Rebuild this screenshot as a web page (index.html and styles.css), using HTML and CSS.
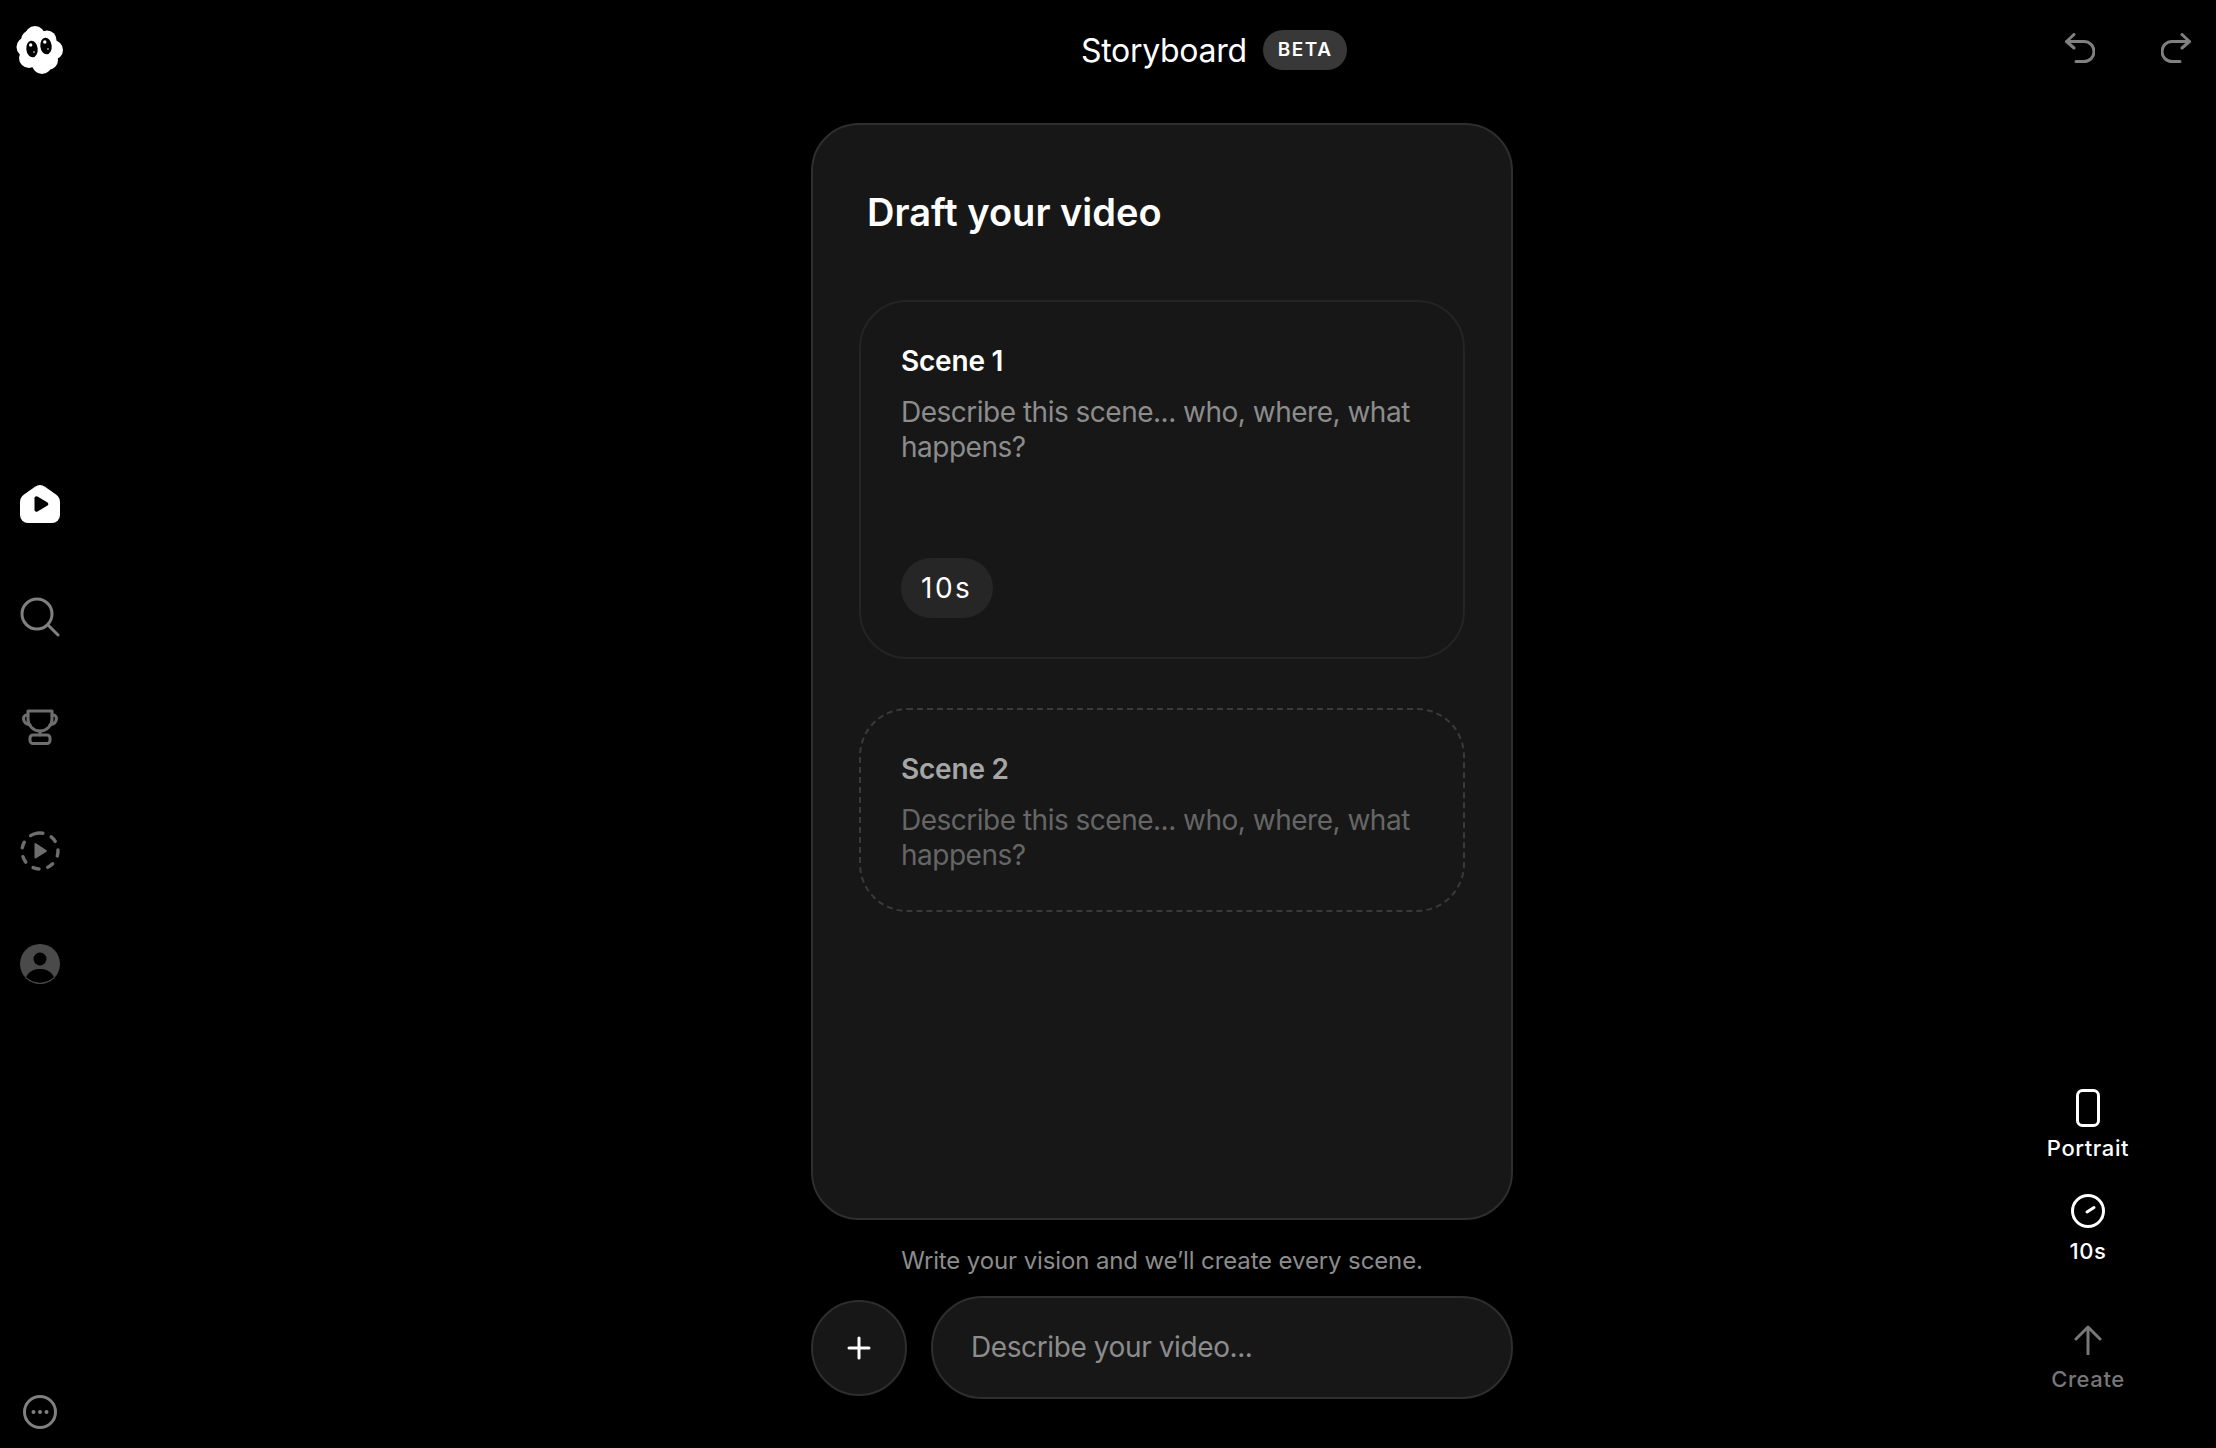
FILE: index.html
```html
<!DOCTYPE html>
<html lang="en">
<head>
    <meta charset="UTF-8">
    <meta name="viewport" content="width=device-width, initial-scale=1.0">
    <title>Storyboard</title>
    <link rel="stylesheet" href="styles.css">
</head>
<body>

<div class="app">
    <aside class="sidebar">
        <svg class="logo" width="48" height="50" viewBox="0 0 48 50">
            <g fill="#fff">
                <circle cx="24" cy="25" r="17"/>
                <circle cx="19" cy="11" r="10"/>
                <circle cx="31" cy="15" r="9.5"/>
                <circle cx="37" cy="25" r="10"/>
                <circle cx="32" cy="35" r="10"/>
                <circle cx="26" cy="39" r="10"/>
                <circle cx="13" cy="33" r="10"/>
                <circle cx="10.5" cy="22" r="10"/>
                <circle cx="15" cy="15" r="10"/>
            </g>
            <ellipse cx="16" cy="24" rx="5.7" ry="8.3" transform="rotate(-6 16 24)" fill="#000"/>
            <ellipse cx="30" cy="21" rx="5.7" ry="8.3" transform="rotate(-6 30 21)" fill="#000"/>
            <circle cx="14.7" cy="20" r="1.7" fill="#fff"/>
            <circle cx="28.8" cy="17" r="1.7" fill="#fff"/>
            <circle cx="18" cy="27" r="0.8" fill="#fff"/>
            <circle cx="32" cy="24" r="0.8" fill="#fff"/>
        </svg>

        <nav class="nav">
            <svg class="nav-home" width="40" height="40" viewBox="0 0 40 40">
                <path d="M15 2.8 Q20 -0.6 25 2.8 L36 10.5 Q40 13.5 40 18 V31 A8 8 0 0 1 32 39 H8 A8 8 0 0 1 0 31 V18 Q0 13.5 4 10.5 Z" fill="#fff"/>
                <path d="M14.5 14.2 A2 2 0 0 1 17.5 12.5 L27.5 18.4 A2 2 0 0 1 27.5 21.6 L17.5 27.5 A2 2 0 0 1 14.5 25.8 Z" fill="#000"/>
            </svg>
            <svg class="nav-search" width="40" height="40" viewBox="0 0 40 40" fill="none" stroke="#808080" stroke-width="3" stroke-linecap="round">
                <circle cx="17" cy="17" r="15"/>
                <path d="M28 28 L38 38"/>
            </svg>
            <svg class="nav-trophy" width="36" height="36" viewBox="0 0 36 36" fill="none" stroke="#6e6e6e" stroke-width="3" stroke-linecap="round" stroke-linejoin="round">
                <path d="M6 2 H30 V10 A12 12 0 0 1 6 10 Z"/>
                <path d="M6 6 H5 A3.5 3.5 0 0 0 1.5 9.5 C1.5 13 4 15 8 16"/>
                <path d="M30 6 H31 A3.5 3.5 0 0 1 34.5 9.5 C34.5 13 32 15 28 16"/>
                <path d="M18 22 V26"/>
                <rect x="8" y="26" width="20" height="8.5" rx="3"/>
            </svg>
            <svg class="nav-drafts" width="40" height="40" viewBox="0 0 40 40">
                <circle cx="20" cy="20" r="18" fill="none" stroke="#6e6e6e" stroke-width="3.4" stroke-linecap="round" stroke-dasharray="6 9.1" transform="rotate(-100 20 20)"/>
                <path d="M14.5 13 V26.5 A1 1 0 0 0 16 27.3 L26.5 20.8 A1 1 0 0 0 26.5 19.2 L16 12.3 A1 1 0 0 0 14.5 13 Z" fill="#6e6e6e"/>
            </svg>
            <svg class="nav-profile" width="40" height="40" viewBox="0 0 40 40">
                <circle cx="20" cy="20" r="20" fill="#4a4a4a"/>
                <circle cx="20" cy="15" r="6.5" fill="#000"/>
                <path d="M6 33 C10 26 15 25 20 25 C25 25 30 26 34 33 A20 20 0 0 1 6 33 Z" fill="#000"/>
            </svg>
        </nav>

        <svg class="more" width="34" height="34" viewBox="0 0 34 34">
            <circle cx="17" cy="17" r="15.5" fill="none" stroke="#808080" stroke-width="3"/>
            <circle cx="10.5" cy="17" r="2" fill="#808080"/>
            <circle cx="17" cy="17" r="2" fill="#808080"/>
            <circle cx="23.5" cy="17" r="2" fill="#808080"/>
        </svg>
    </aside>

    <main class="center">
        <header class="topbar">
            <span class="page-title">Storyboard</span>
            <span class="beta">BETA</span>
        </header>

        <section class="panel">
            <h1>Draft your video</h1>

            <div class="scene">
                <h2>Scene 1</h2>
                <p>Describe this scene... who, where, what happens?</p>
                <span class="chip">10s</span>
            </div>

            <div class="scene scene-next">
                <h2>Scene 2</h2>
                <p>Describe this scene... who, where, what happens?</p>
            </div>
        </section>

        <p class="hint">Write your vision and we’ll create every scene.</p>

        <div class="composer">
            <button class="add-btn">
                <svg width="24" height="24" viewBox="0 0 24 24" fill="none" stroke="#fff" stroke-width="3" stroke-linecap="round">
                    <path d="M12 2 V22 M2 12 H22"/>
                </svg>
            </button>
            <div class="prompt">Describe your video...</div>
        </div>
    </main>

    <aside class="rail">
        <div class="history">
            <svg width="30" height="30" viewBox="0 0 30 30" fill="none" stroke="#808080" stroke-width="3" stroke-linecap="round" stroke-linejoin="round">
                <path d="M9 1.5 L1.5 8.5 L9 15"/>
                <path d="M2 8.5 H19 A9.5 9.5 0 0 1 19 28.5 H11"/>
            </svg>
            <svg width="30" height="30" viewBox="0 0 30 30" fill="none" stroke="#808080" stroke-width="3" stroke-linecap="round" stroke-linejoin="round">
                <path d="M21 1.5 L28.5 8.5 L21 15"/>
                <path d="M28 8.5 H11 A9.5 9.5 0 0 0 11 28.5 H19"/>
            </svg>
        </div>

        <div class="tools">
            <div class="tool tool-portrait">
                <svg width="24" height="38" viewBox="0 0 24 38" fill="none" stroke="#fff" stroke-width="3">
                    <rect x="1.5" y="1.5" width="21" height="35" rx="5"/>
                </svg>
                <span>Portrait</span>
            </div>
            <div class="tool tool-length">
                <svg width="34" height="34" viewBox="0 0 34 34" fill="none" stroke="#fff" stroke-width="3" stroke-linecap="round">
                    <circle cx="17" cy="17" r="15.5"/>
                    <path d="M16 18 L23 13.5"/>
                </svg>
                <span>10s</span>
            </div>
            <div class="tool tool-create">
                <svg width="28" height="30" viewBox="0 0 28 30" fill="none" stroke="#777" stroke-width="3" stroke-linecap="round" stroke-linejoin="round">
                    <path d="M14 29 V2 M2 14 L14 2 L26 14"/>
                </svg>
                <span>Create</span>
            </div>
        </div>
    </aside>
</div>

</body>
</html>
```

FILE: styles.css
```css
* {
    box-sizing: border-box;
}
body {
    font-family: Inter, "Noto Sans", sans-serif;
    margin: 0;
    background-color: #000;
    color: #fff;
}
.app {
    display: grid;
    grid-template-columns: 811px 702px 1fr;
    height: 1448px;
    overflow: hidden;
}

/* left nav */
.sidebar {
    display: flex;
    flex-direction: column;
    align-items: flex-start;
    padding: 25px 0 19px 16px;
}
.logo {
    display: block;
}
.nav {
    display: flex;
    flex-direction: column;
    align-items: center;
    width: 48px;
    margin-top: 409px;
}
.nav-search {
    margin-top: 73px;
}
.nav-trophy {
    margin-top: 72px;
}
.nav-drafts {
    margin-top: 86px;
}
.nav-profile {
    margin-top: 73px;
}
.more {
    margin-top: auto;
    margin-left: 7px;
}

/* middle column */
.center {
    display: flex;
    flex-direction: column;
}
.topbar {
    display: flex;
    align-items: center;
    gap: 16px;
    height: 100px;
    margin-bottom: 23px;
    padding-left: 270px;
}
.page-title {
    font-size: 32px;
    letter-spacing: -0.3px;
    white-space: nowrap;
}
.beta {
    padding: 0 15px;
    line-height: 40px;
    border-radius: 20px;
    background-color: #383838;
    font-size: 19px;
    font-weight: 600;
    letter-spacing: 1.5px;
}
.panel {
    height: 1097px;
    padding: 64px 46px 0;
    background-color: #171717;
    border: 2px solid #2e2e2e;
    border-radius: 48px;
}
h1 {
    margin: 0 0 65px 8px;
    font-size: 38px;
    line-height: 46px;
    font-weight: 600;
}
.scene {
    height: 359px;
    margin-bottom: 49px;
    padding: 42px 40px 0;
    border: 2px solid #242424;
    border-radius: 48px;
}
.scene h2 {
    margin: 0 0 17px;
    font-size: 28px;
    line-height: 34px;
    font-weight: 600;
    letter-spacing: -0.2px;
}
.scene p {
    margin: 0;
    font-size: 28px;
    line-height: 35px;
    letter-spacing: -0.5px;
    color: #8c8c8c;
}
.chip {
    display: inline-block;
    margin-top: 93px;
    padding: 0 21px 0 20px;
    line-height: 60px;
    border-radius: 30px;
    background-color: #262626;
    font-size: 28px;
    letter-spacing: 2.5px;
}
.scene-next {
    height: 204px;
    border: 2px dashed #3a3a3a;
}
.scene-next h2 {
    color: #a6a6a6;
}
.scene-next p {
    color: #666;
}
.hint {
    margin: 29px 0 0;
    text-align: center;
    font-size: 24px;
    line-height: 24px;
    letter-spacing: -0.12px;
    color: #8c8c8c;
}
.composer {
    display: flex;
    align-items: center;
    gap: 24px;
    margin-top: 23px;
}
.add-btn {
    display: flex;
    align-items: center;
    justify-content: center;
    width: 96px;
    height: 96px;
    padding: 0;
    background-color: #171717;
    border: 2px solid #2e2e2e;
    border-radius: 50%;
}
.prompt {
    flex: 1;
    height: 103px;
    padding-left: 38px;
    line-height: 99px;
    background-color: #171717;
    border: 2px solid #2e2e2e;
    border-radius: 52px;
    font-size: 28px;
    letter-spacing: -0.4px;
    color: #8c8c8c;
}

/* right side */
.rail {
    display: flex;
    flex-direction: column;
    justify-content: space-between;
    padding: 0 25px 56px 0;
}
.history {
    display: flex;
    justify-content: flex-end;
    gap: 66px;
    padding-top: 33px;
}
.tools {
    display: flex;
    flex-direction: column;
    align-items: center;
    align-self: flex-end;
    width: 100px;
    margin-right: 53px;
}
.tool {
    display: flex;
    flex-direction: column;
    align-items: center;
    font-size: 22px;
    font-weight: 500;
    line-height: 26px;
    letter-spacing: 0.6px;
    white-space: nowrap;
}
.tool svg {
    display: block;
    margin-bottom: 8px;
}
.tool-length {
    margin-top: 33px;
}
.tool-length svg {
    margin-bottom: 10px;
}
.tool-create {
    margin-top: 61px;
    color: #777;
}
.tool-create svg {
    margin-bottom: 11px;
}
```
